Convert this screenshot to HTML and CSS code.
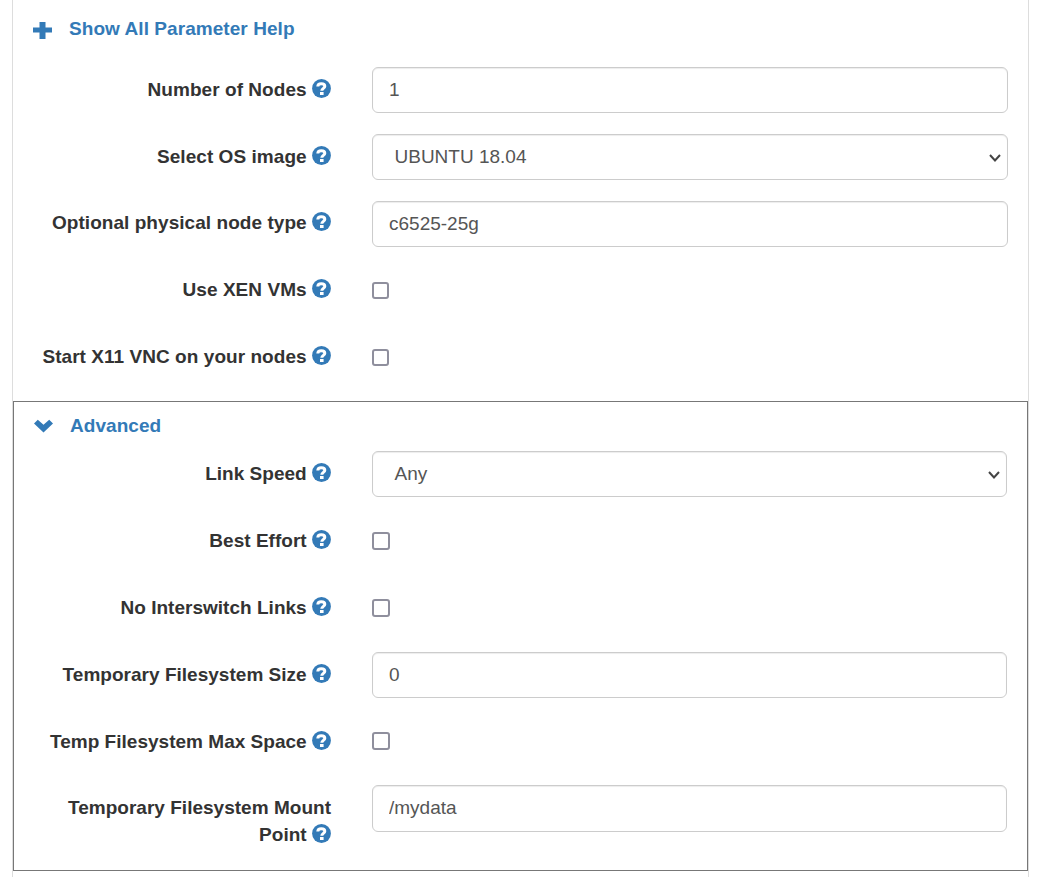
FILE: index.html
```
<!DOCTYPE html>
<html lang="en">
<head>
<meta charset="utf-8">
<title>Parameterize</title>
<link rel="stylesheet" href="styles.css">
</head>
<body>
<svg width="0" height="0" class="defs">
  <symbol id="help" viewBox="0 0 19 19">
    <circle cx="9.5" cy="9.5" r="9.4" fill="#337ab7"/>
    <path d="M5.800 7.600C5.800 5.500 7.200 4.700 9.300 4.700c2.200 0 3.500 1 3.500 2.600 0 2.200-3 2-3 4.500" fill="none" stroke="#fff" stroke-width="3"/>
    <path d="M8 13h3.600v3H8z" fill="#fff"/>
  </symbol>
</svg>
<main class="panel">
  <a class="toggle"><svg class="toggle-icon" viewBox="0 0 19 19"><path d="M6.500 1h6v5.500h6.500v5h-6.500V18h-6v-6.500H0v-5h6.500z"/></svg>Show All Parameter Help</a>
  <form class="rows">
    <div class="row"><label>Number of Nodes <svg class="help"><use href="#help"/></svg></label><input class="control" type="text" value="1"></div>
    <div class="row"><label>Select OS image <svg class="help"><use href="#help"/></svg></label><div class="control select">UBUNTU 18.04<svg class="arrow" viewBox="0 0 12 8"><path d="M1 1l5 5.500 5-5.500"/></svg></div></div>
    <div class="row"><label>Optional physical node type <svg class="help"><use href="#help"/></svg></label><input class="control" type="text" value="c6525-25g"></div>
    <div class="row"><label>Use XEN VMs <svg class="help"><use href="#help"/></svg></label><input class="check" type="checkbox"></div>
    <div class="row"><label>Start X11 VNC on your nodes <svg class="help"><use href="#help"/></svg></label><input class="check" type="checkbox"></div>
  </form>
  <section class="advanced">
    <a class="toggle"><svg class="toggle-icon" viewBox="0 0 19 19"><path d="M0 6.500l3.800-3.800 5.700 5 5.700-5L19 6.500l-9.500 9z"/></svg>Advanced</a>
    <form class="rows">
      <div class="row"><label>Link Speed <svg class="help"><use href="#help"/></svg></label><div class="control select">Any<svg class="arrow" viewBox="0 0 12 8"><path d="M1 1l5 5.500 5-5.500"/></svg></div></div>
      <div class="row"><label>Best Effort <svg class="help"><use href="#help"/></svg></label><input class="check" type="checkbox"></div>
      <div class="row"><label>No Interswitch Links <svg class="help"><use href="#help"/></svg></label><input class="check" type="checkbox"></div>
      <div class="row"><label>Temporary Filesystem Size <svg class="help"><use href="#help"/></svg></label><input class="control" type="text" value="0"></div>
      <div class="row"><label>Temp Filesystem Max Space <svg class="help"><use href="#help"/></svg></label><input class="check" type="checkbox"></div>
      <div class="row"><label>Temporary Filesystem Mount Point <svg class="help"><use href="#help"/></svg></label><input class="control" type="text" value="/mydata"></div>
    </form>
  </section>
</main>
</body>
</html>
```
FILE: styles.css
```
* { box-sizing: border-box; }
body {
  margin: 0;
  background: #fff;
  color: #333;
  font: 19px/26.67px "Liberation Sans", Arial, sans-serif;
  overflow: hidden;
}
.defs { display: block; }
.panel {
  height: 877px;
  margin: 0 11px 0 12px;
  border: solid #ddd;
  border-width: 0 1px;
}
.toggle {
  display: flex;
  align-items: center;
  height: 67px;
  padding: 0 0 9px 20px;
  color: #337ab7;
  font-weight: bold;
  letter-spacing: 0.06px;
}
.toggle-icon {
  width: 19px;
  height: 19px;
  margin: 2px 17px 0 0;
  fill: #337ab7;
}
.row {
  display: grid;
  grid-template-columns: 318px 636px;
  column-gap: 41px;
  align-items: start;
  height: 66.8px;
}
.row label {
  padding: 9.8px 0 0 25px;
  font-weight: bold;
  letter-spacing: 0.05px;
  text-align: right;
}
.help {
  width: 19px;
  height: 19px;
  vertical-align: -2px;
}
.control {
  display: block;
  width: 100%;
  height: 46.4px;
  padding: 0 16px;
  border: 1px solid #ccc;
  border-radius: 6px;
  background: #fff;
  box-shadow: inset 0 1px 1px rgba(0, 0, 0, 0.075);
  color: #555;
  font: inherit;
}
.select {
  display: flex;
  align-items: center;
  justify-content: space-between;
  padding: 1px 6px 0 21.5px;
}
.arrow {
  width: 12px;
  height: 8px;
  margin-top: 1px;
  fill: none;
  stroke: #444;
  stroke-width: 2;
}
.check {
  appearance: none;
  width: 17px;
  height: 17px;
  margin: 14.5px 0 0;
  border: 2px solid #8f8f9d;
  border-radius: 3px;
  background: #fff;
}
.advanced {
  height: 470px;
  border: 1px solid #777;
}
.advanced .toggle { height: 49px; padding-bottom: 1px; }
.advanced .rows { padding-top: 0.3px; }
.advanced .row { grid-template-columns: 317px 635px; }
.advanced .row label { padding-top: 10.2px; letter-spacing: 0.02px; }
.advanced .select { height: 46px; }
.advanced .check { width: 18px; height: 18px; margin-top: 14px; }
```
